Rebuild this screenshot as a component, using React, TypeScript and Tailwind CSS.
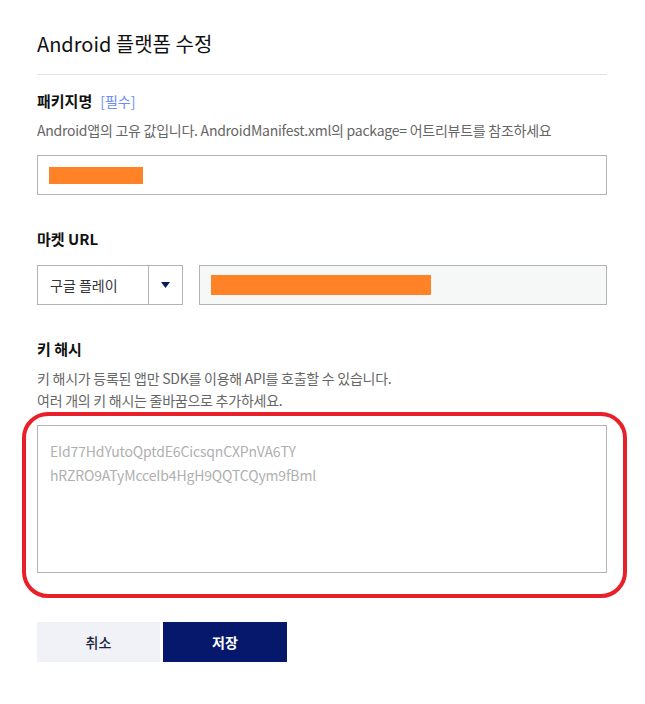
import React from "react";

const font = { fontFamily: '"Noto Sans CJK KR", "Noto Sans", sans-serif' };

function Label({ children, required }: { children: React.ReactNode; required?: boolean }) {
  return (
    <div className="flex items-baseline gap-[8px] text-[15px] font-bold leading-[22px] text-[#111]">
      {children}
      {required && <span className="text-[14px] font-normal text-[#6d8cf5]">[필수]</span>}
    </div>
  );
}

export default function App() {
  return (
    <div className="min-h-[704px] w-[645px] bg-white pl-[37px] pr-[38px]" style={font}>
      <h1 className="border-b border-[#e3e3e3] pt-[30px] pb-[16px] text-[20px] font-normal leading-[28px] text-[#111]">
        Android 플랫폼 수정
      </h1>

      {/* package name */}
      <div className="mt-[15px]">
        <Label required>패키지명</Label>
        <p className="mt-[7px] text-[14px] leading-[22px] tracking-[-0.25px] text-[#666]">
          Android앱의 고유 값입니다. AndroidManifest.xml의 package= 어트리뷰트를 참조하세요
        </p>
        <div className="mt-[14px] flex h-[40px] items-center border border-[#b3b3b3] bg-white pl-[11px]">
          <div className="h-[17px] w-[94px] bg-[#ff8326]" />
        </div>
      </div>

      {/* market url */}
      <div className="mt-[33px]">
        <Label>마켓 URL</Label>
        <div className="mt-[15px] flex h-[40px] gap-[16px]">
          <div className="flex w-[146px] border border-[#b3b3b3] bg-white">
            <div className="flex w-[111px] items-center border-r border-[#b3b3b3] pl-[12px] text-[14px] text-[#333]">
              구글 플레이
            </div>
            <div className="flex flex-1 items-center justify-center">
              <svg width="9" height="6" viewBox="0 0 9 6">
                <path d="M0 0h9L4.5 6z" fill="#0b1a5e" />
              </svg>
            </div>
          </div>
          <div className="flex flex-1 items-center border border-[#b3b3b3] bg-[#f6f7f7] pl-[11px]">
            <div className="h-[20px] w-[220px] bg-[#ff8326]" />
          </div>
        </div>
      </div>

      {/* key hash */}
      <div className="mt-[33px]">
        <Label>키 해시</Label>
        <p className="mt-[7px] text-[14px] leading-[22px] tracking-[-0.25px] text-[#666]">
          키 해시가 등록된 앱만 SDK를 이용해 API를 호출할 수 있습니다.
          <br />
          여러 개의 키 해시는 줄바꿈으로 추가하세요.
        </p>
        <div className="relative mt-[14px]">
          <textarea
            readOnly
            className="block h-[148px] w-full resize-none border border-[#b3b3b3] bg-white px-[12px] pt-[13px] text-[14px] leading-[24px] tracking-[-0.15px] text-[#333] outline-none placeholder:text-[#b0b0b0]"
            style={font}
            placeholder={"EId77HdYutoQptdE6CicsqnCXPnVA6TY\nhRZRO9ATyMcceIb4HgH9QQTCQym9fBml"}
          />
          <div className="pointer-events-none absolute -left-[15px] -top-[13px] h-[186px] w-[605px] rounded-[26px] border-[4px] border-[#e8202a]" />
        </div>
      </div>

      {/* actions */}
      <div className="mt-[49px] flex gap-[3px]">
        <button className="h-[40px] w-[123px] bg-[#f1f2f8] text-[14px] font-medium text-[#1b1f3b]">취소</button>
        <button className="h-[40px] w-[124px] bg-[#06186b] text-[14px] font-bold text-white">저장</button>
      </div>
    </div>
  );
}
